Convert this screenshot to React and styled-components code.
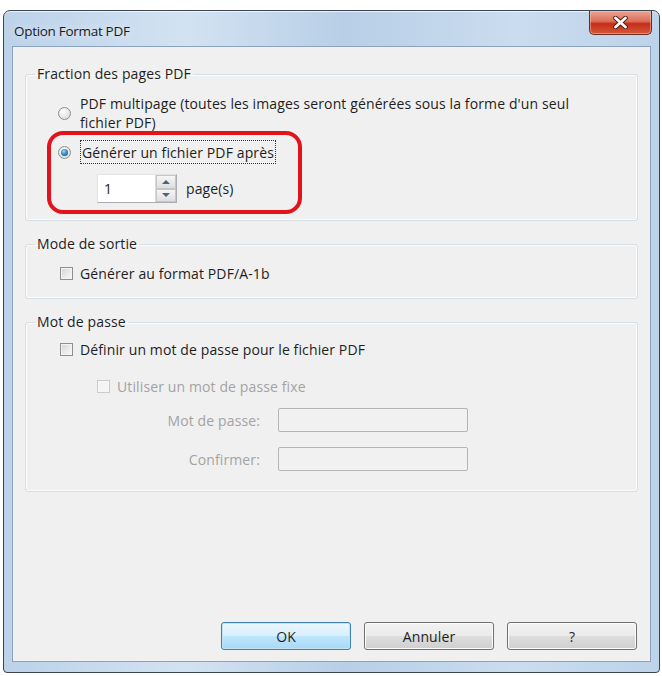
import React from 'react';
import styled, { createGlobalStyle } from 'styled-components';

const GlobalStyle = createGlobalStyle`
  html, body {
    margin: 0;
    padding: 0;
    background: #ffffff;
  }
  body {
    font-family: 'Open Sans', 'Noto Sans', sans-serif;
    font-size: 14px;
    letter-spacing: 0.12px;
    color: #1e1e1e;
  }
`;

const Page = styled.div`
  padding: 10px 0 0 3px;
`;

const Window = styled.div`
  width: 657px;
  height: 663px;
  box-sizing: border-box;
  border: 1px solid #3b4450;
  border-radius: 7px 7px 4px 4px;
  background: linear-gradient(90deg, #bcd2e9 0%, #d2e2f2 28%, #b8cfe7 52%, #cadcef 78%, #bdd3ea 100%);
  box-shadow: inset 0 1px 0 rgba(255, 255, 255, 0.7);
  display: flex;
  flex-direction: column;
  padding: 0 8px 10px 8px;
`;

const TitleBar = styled.div`
  height: 35px;
  display: flex;
  align-items: flex-start;
  justify-content: space-between;
`;

const Title = styled.div`
  font-size: 13.5px;
  letter-spacing: -0.3px;
  color: #1a1a1a;
  padding: 11px 0 0 2px;
  text-shadow: 0 0 8px rgba(255, 255, 255, 0.9);
`;

const CloseButton = styled.div`
  width: 63px;
  height: 24px;
  margin: 0 -1px 0 0;
  box-sizing: border-box;
  border: 1px solid #6b2a22;
  border-top: none;
  border-radius: 0 0 5px 5px;
  background: linear-gradient(180deg, #eba493 0%, #dc6e58 45%, #c52e16 55%, #d4583b 100%);
  box-shadow: inset 0 0 0 1px rgba(255, 210, 200, 0.45);
  display: flex;
  align-items: center;
  justify-content: center;
`;

const Client = styled.div`
  flex: 1;
  border: 1px solid #8ba3bd;
  background: #f0f0f0;
  display: flex;
  flex-direction: column;
  padding: 17px 12px 11px 12px;
  gap: 13px;
`;

const Group = styled.fieldset`
  margin: 0;
  padding: 0 0 ${(p) => p.$bottom}px 0;
  min-width: 0;
  border: 1px solid #d5dfe5;
  border-radius: 3px;
  box-shadow: inset 0 0 0 1px #fbfbfb;
`;

const Legend = styled.legend`
  margin-left: 9px;
  padding: 0 2px;
  line-height: 20px;
  color: #1e1e1e;
`;

const RadioRow = styled.div`
  display: flex;
  align-items: center;
  margin-left: ${(p) => p.$left || 0}px;
  margin-top: ${(p) => p.$top || 0}px;
`;

const RadioText = styled.div`
  margin-left: 9px;
  line-height: 19px;
`;

const Radio = styled.div`
  width: 13px;
  height: 13px;
  flex: none;
  box-sizing: border-box;
  border-radius: 50%;
  border: 1px solid #8e8f8f;
  background: radial-gradient(circle at 40% 35%, #ffffff 0%, #e6e6e6 55%, #cfcfcf 100%);
  display: flex;
  align-items: center;
  justify-content: center;

  &::after {
    content: '';
    display: ${(p) => (p.$checked ? 'block' : 'none')};
    width: 7px;
    height: 7px;
    border-radius: 50%;
    background: radial-gradient(circle at 40% 35%, #9fd8f7 0%, #2e86c1 50%, #0e4e7e 100%);
  }
`;

const Highlight = styled.div`
  width: 255px;
  box-sizing: border-box;
  margin: -1px 0 0 21px;
  border: 4px solid #e3131b;
  border-radius: 16px;
  padding: 5px 0 7px 7px;
`;

const FocusLabel = styled.div`
  margin-left: 9px;
  height: 24px;
  box-sizing: border-box;
  border: 1px dotted #333;
  padding: 0 1px;
  display: flex;
  align-items: center;
`;

const SpinRow = styled.div`
  display: flex;
  align-items: center;
  margin: 10px 0 0 39px;
`;

const Spinner = styled.div`
  display: flex;
  height: 29px;
  box-sizing: border-box;
  border: 1px solid #abadb3;
  border-top-color: #e3e3e3;
  border-left-color: #e2e3ea;
  background: #fff;
`;

const SpinValue = styled.div`
  width: 57px;
  padding-left: 6px;
  box-sizing: border-box;
  display: flex;
  align-items: center;
`;

const SpinButtons = styled.div`
  width: 20px;
  display: flex;
  flex-direction: column;
  background: #f0f0f0;
  border-left: 1px solid #d9d9d9;
`;

const SpinButton = styled.div`
  flex: 1;
  display: flex;
  align-items: center;
  justify-content: center;
  border: 1px solid #c6c6c6;
  background: linear-gradient(180deg, #f6f6f6, #dedede);
`;

const Arrow = styled.div`
  width: 0;
  height: 0;
  border-left: 4px solid transparent;
  border-right: 4px solid transparent;
  ${(p) => (p.$up ? 'border-bottom: 4px solid #4d6185;' : 'border-top: 4px solid #4d6185;')}
`;

const Unit = styled.div`
  margin-left: 9px;
`;

const CheckRow = styled.div`
  display: flex;
  align-items: center;
  height: 20px;
  margin: ${(p) => p.$top}px 0 0 ${(p) => p.$left}px;
  color: ${(p) => (p.$disabled ? '#a3a3a3' : '#1e1e1e')};
`;

const Checkbox = styled.div`
  width: 13px;
  height: 13px;
  flex: none;
  margin-right: 7px;
  box-sizing: border-box;
  border: 1px solid ${(p) => (p.$disabled ? '#cbcbcb' : '#8e8f8f')};
  background: ${(p) =>
    p.$disabled
      ? '#f4f4f4'
      : 'linear-gradient(135deg, #d4d4d4 0%, #ececec 60%, #fafafa 100%)'};
  box-shadow: inset 0 0 0 1px ${(p) => (p.$disabled ? '#f7f7f7' : '#f4f4f4')};
`;

const FieldRow = styled.div`
  display: flex;
  align-items: center;
  gap: 18px;
  margin-top: ${(p) => p.$top}px;
`;

const FieldLabel = styled.div`
  width: 234px;
  text-align: right;
  color: #a3a3a3;
`;

const FieldInput = styled.div`
  width: 190px;
  height: 24px;
  box-sizing: border-box;
  border: 1px solid #b5b5b5;
  border-radius: 2px;
  background: #f1f1f1;
`;

const Footer = styled.div`
  margin-top: auto;
  display: flex;
  justify-content: flex-end;
  gap: 13px;
  padding-right: 1px;
`;

const Button = styled.div`
  width: 130px;
  height: 28px;
  box-sizing: border-box;
  border-radius: 3px;
  display: flex;
  align-items: center;
  justify-content: center;
  color: #1e1e1e;
  border: 1px solid ${(p) => (p.$default ? '#3c7fb1' : '#707070')};
  background: ${(p) =>
    p.$default
      ? 'linear-gradient(180deg, #eaf6fd 0%, #d9f0fc 48%, #bee6fd 52%, #a7d9f5 100%)'
      : 'linear-gradient(180deg, #f2f2f2 0%, #ebebeb 48%, #dddddd 52%, #cfcfcf 100%)'};
  box-shadow: inset 0 0 0 1px ${(p) => (p.$default ? '#c4e5f6' : '#fcfcfc')};
`;

const App = () => {
  return (
    <>
      <GlobalStyle />
      <Page>
        <Window>
          <TitleBar>
            <Title>Option Format PDF</Title>
            <CloseButton>
              <svg width="15" height="13" viewBox="0 0 15 13">
                <path
                  d="M2.5 2 L12.5 11 M12.5 2 L2.5 11"
                  stroke="#4a1a12"
                  strokeWidth="4.6"
                  strokeLinecap="round"
                />
                <path
                  d="M2.5 2 L12.5 11 M12.5 2 L2.5 11"
                  stroke="#ffffff"
                  strokeWidth="2.8"
                  strokeLinecap="round"
                />
              </svg>
            </CloseButton>
          </TitleBar>
          <Client>
            <Group $bottom={6}>
              <Legend>Fraction des pages PDF</Legend>
              <RadioRow $left={32} $top={10}>
                <Radio />
                <RadioText>
                  PDF multipage (toutes les images seront générées sous la forme d'un seul
                  <br />
                  fichier PDF)
                </RadioText>
              </RadioRow>
              <Highlight>
                <RadioRow>
                  <Radio $checked />
                  <FocusLabel>Générer un fichier PDF après</FocusLabel>
                </RadioRow>
                <SpinRow>
                  <Spinner>
                    <SpinValue>1</SpinValue>
                    <SpinButtons>
                      <SpinButton>
                        <Arrow $up />
                      </SpinButton>
                      <SpinButton>
                        <Arrow />
                      </SpinButton>
                    </SpinButtons>
                  </Spinner>
                  <Unit>page(s)</Unit>
                </SpinRow>
              </Highlight>
            </Group>

            <Group $bottom={15}>
              <Legend>Mode de sortie</Legend>
              <CheckRow $top={9} $left={34}>
                <Checkbox />
                Générer au format PDF/A-1b
              </CheckRow>
            </Group>

            <Group $bottom={20}>
              <Legend>Mot de passe</Legend>
              <CheckRow $top={7} $left={34}>
                <Checkbox />
                Définir un mot de passe pour le fichier PDF
              </CheckRow>
              <CheckRow $top={17} $left={71} $disabled>
                <Checkbox $disabled />
                Utiliser un mot de passe fixe
              </CheckRow>
              <FieldRow $top={12}>
                <FieldLabel>Mot de passe:</FieldLabel>
                <FieldInput />
              </FieldRow>
              <FieldRow $top={15}>
                <FieldLabel>Confirmer:</FieldLabel>
                <FieldInput />
              </FieldRow>
            </Group>

            <Footer>
              <Button $default>OK</Button>
              <Button>Annuler</Button>
              <Button>?</Button>
            </Footer>
          </Client>
        </Window>
      </Page>
    </>
  );
};

export default App;
